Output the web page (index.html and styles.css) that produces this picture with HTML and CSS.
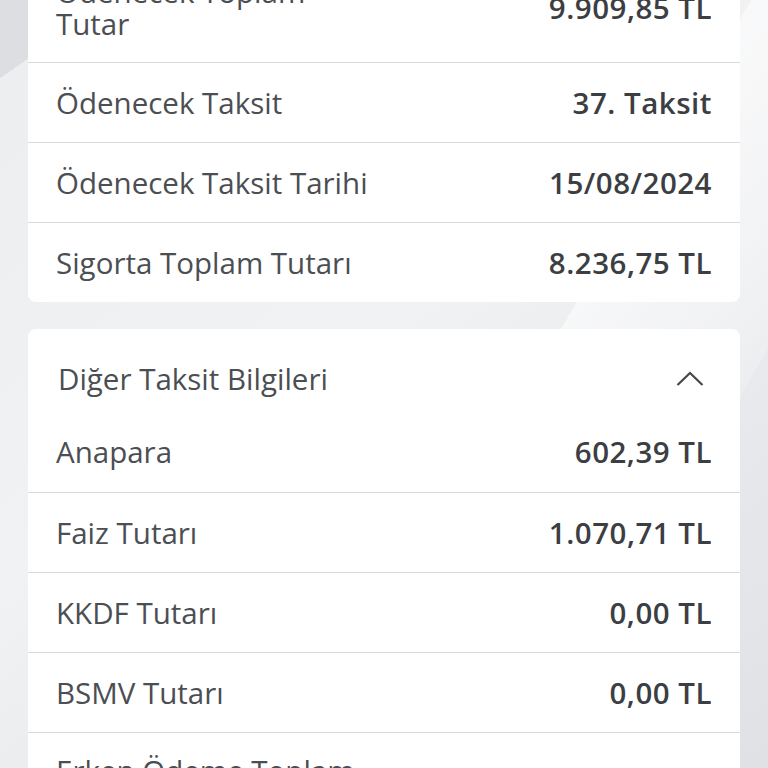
FILE: index.html
```html
<!DOCTYPE html>
<html lang="tr">
<head>
    <meta charset="UTF-8">
    <meta name="viewport" content="width=device-width, initial-scale=1.0">
    <title>Taksit Detayı</title>
    <link rel="stylesheet" href="styles.css">
</head>
<body>
    <div class="page">
        <div class="card card-top">
            <div class="row tall">
                <span class="label">Ödenecek Toplam<br>Tutar</span>
                <span class="value">9.909,85 TL</span>
            </div>
            <div class="row">
                <span class="label">Ödenecek Taksit</span>
                <span class="value">37. Taksit</span>
            </div>
            <div class="row">
                <span class="label">Ödenecek Taksit Tarihi</span>
                <span class="value">15/08/2024</span>
            </div>
            <div class="row">
                <span class="label">Sigorta Toplam Tutarı</span>
                <span class="value">8.236,75 TL</span>
            </div>
        </div>

        <div class="card">
            <div class="card-head">
                <span class="head-title">Diğer Taksit Bilgileri</span>
                <svg class="chevron" width="28" height="16" viewBox="0 0 28 16">
                    <path d="M1.5 14 L14 2 L26.5 14" fill="none" stroke="#45484c" stroke-width="2.2"/>
                </svg>
            </div>
            <div class="row first">
                <span class="label">Anapara</span>
                <span class="value">602,39 TL</span>
            </div>
            <div class="row">
                <span class="label">Faiz Tutarı</span>
                <span class="value">1.070,71 TL</span>
            </div>
            <div class="row">
                <span class="label">KKDF Tutarı</span>
                <span class="value">0,00 TL</span>
            </div>
            <div class="row">
                <span class="label">BSMV Tutarı</span>
                <span class="value">0,00 TL</span>
            </div>
            <div class="row tall">
                <span class="label">Erken Ödeme Toplam<br>Tutarı</span>
                <span class="value">9.909,85 TL</span>
            </div>
        </div>
    </div>
</body>
</html>
```

FILE: styles.css
```css
html, body {
    height: 100%;
}

body {
    margin: 0;
    overflow: hidden;
    font-family: "Open Sans", "Noto Sans", sans-serif;
    background-color: #e4e6e9;
    background-image:
        linear-gradient(120deg, transparent 0, transparent 62%, rgba(255, 255, 255, 0.55) 62%, rgba(255, 255, 255, 0.2) 80%, transparent 80%),
        linear-gradient(145deg, #dcdee1 0, #dcdee1 6%, #eceef0 6%, #f1f2f4 45%, #e6e8eb 75%, #dfe1e4 100%);
}

.page {
    padding: 0 28px;
}

.card {
    background: #fff;
    border-radius: 8px;
    margin-bottom: 27px;
    overflow: hidden;
}

.card-top {
    margin-top: -46px;
    border-radius: 0 0 8px 8px;
}

.row {
    display: flex;
    justify-content: space-between;
    align-items: center;
    min-height: 80px;
    padding: 0 28px;
    border-top: 1px solid #d9dadd;
    box-sizing: border-box;
}

.row:first-child,
.row.first {
    border-top: none;
}

.row.tall {
    padding-top: 22px;
    padding-bottom: 22px;
}

.label {
    font-size: 29.5px;
    line-height: 32px;
    color: #4b4e52;
}

.value {
    font-size: 29.5px;
    line-height: 32px;
    font-weight: 600;
    letter-spacing: 0.5px;
    color: #3b3e42;
    white-space: nowrap;
}

.card-head {
    display: flex;
    justify-content: space-between;
    align-items: center;
    padding: 34px 36px 17px 30px;
}

.head-title {
    font-size: 29.5px;
    line-height: 32px;
    color: #4b4e52;
}

.chevron {
    display: block;
}
```
